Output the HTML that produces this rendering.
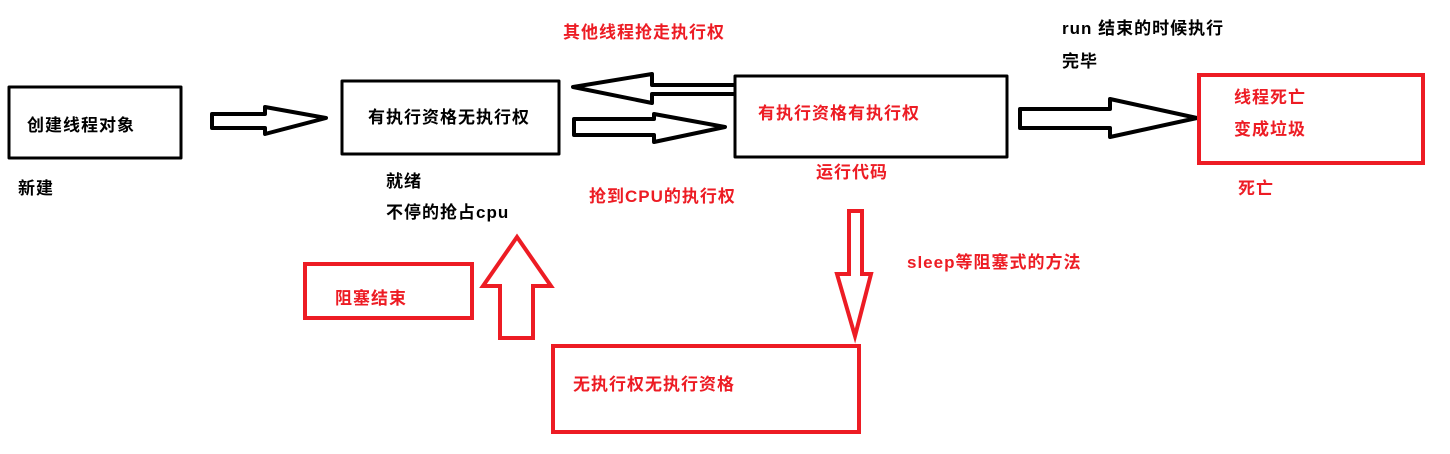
<!DOCTYPE html>
<html><head><meta charset="utf-8"><style>
html,body{margin:0;padding:0;background:#fff;width:1450px;height:454px;overflow:hidden}
svg text{font-family:"Liberation Sans","Noto Sans CJK SC",sans-serif;font-weight:bold;font-size:17px;letter-spacing:1px}
.r{fill:#ed1c24}.k{fill:#000}
</style></head><body>
<svg width="1450" height="454" xmlns="http://www.w3.org/2000/svg">
<g fill="none" stroke="#000" stroke-width="3" stroke-linejoin="round">
<rect x="9" y="87" width="172" height="71"/>
<rect x="342" y="81" width="217" height="73"/>
<rect x="735" y="76" width="272" height="81"/>
</g>
<g fill="none" stroke="#000" stroke-width="4" stroke-linejoin="round">
<path d="M212 114 H265 V107 L326 118 L265 134 V128 H212 Z"/>
<path d="M734 85 H652 V74 L573 87 L652 103 V94 H734"/>
<path d="M574 119 H654 V114 L725 127 L654 142 V135 H574 Z"/>
<path d="M1020 109 H1110 V99 L1197 118 L1110 137 V128 H1020 Z"/>
</g>
<g fill="none" stroke="#ed1c24" stroke-width="4" stroke-linejoin="miter">
<rect x="1199" y="75" width="224" height="88"/>
<rect x="305" y="264" width="167" height="54"/>
<rect x="553" y="346" width="306" height="86"/>
<path d="M517 237 L551 286 H533 V338 H500 V286 H483 Z"/>
<path d="M849 211 H862 V274 H871 L855 336 L837 274 H849 Z"/>
</g>
<text class="k" x="27" y="131">创建线程对象</text>
<text class="k" x="368" y="123">有执行资格无执行权</text>
<text class="r" x="758" y="119">有执行资格有执行权</text>
<text class="r" x="1234" y="103">线程死亡</text>
<text class="r" x="1234" y="135">变成垃圾</text>
<text class="r" x="335" y="304">阻塞结束</text>
<text class="r" x="573" y="390">无执行权无执行资格</text>
<text class="k" x="18" y="194">新建</text>
<text class="k" x="386" y="187">就绪</text>
<text class="k" x="386" y="218">不停的抢占cpu</text>
<text class="r" x="563" y="38">其他线程抢走执行权</text>
<text class="r" x="589" y="202">抢到CPU的执行权</text>
<text class="r" x="816" y="178">运行代码</text>
<text class="k" x="1062" y="34">run 结束的时候执行</text>
<text class="k" x="1062" y="67">完毕</text>
<text class="r" x="1238" y="194">死亡</text>
<text class="r" x="907" y="268">sleep等阻塞式的方法</text>
</svg>
</body></html>
